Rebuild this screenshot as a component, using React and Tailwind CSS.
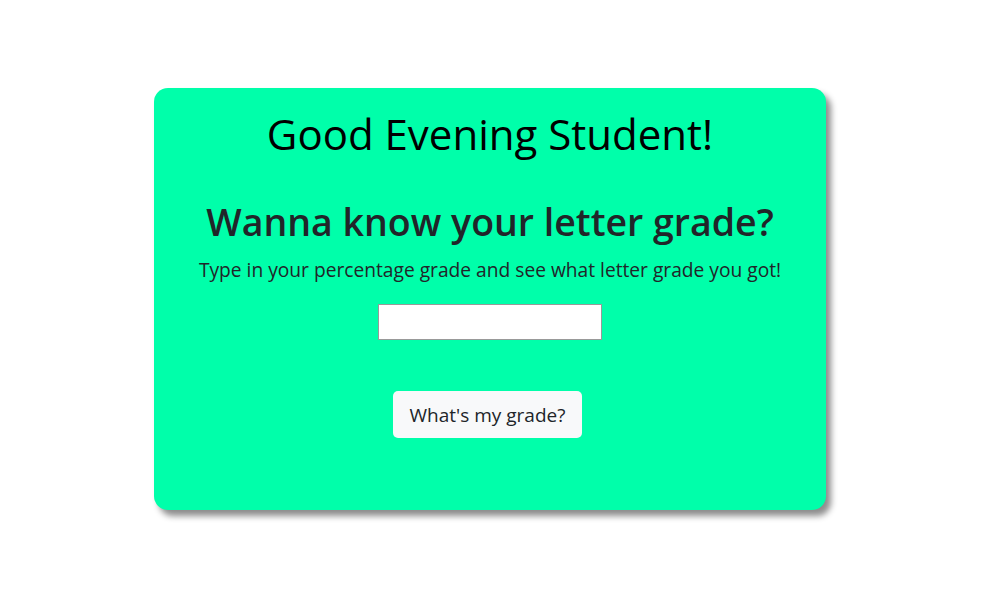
export default function App() {
  return (
    <div className="min-h-screen bg-white pt-[88px]" style={{ fontFamily: '"Open Sans", "Noto Sans", sans-serif' }}>
      <div className="ml-[154px] flex h-[422px] w-[672px] flex-col items-center rounded-[14px] bg-[#00ffaa] shadow-[5px_6px_6px_rgba(0,0,0,0.45)]">
        <h1 className="mt-[18px] text-[42px] leading-[56px] text-black">Good Evening Student!</h1>

        <h2 className="mt-[36px] text-[37.5px] font-semibold leading-[48px] text-[#212529]">
          Wanna know your letter grade?
        </h2>
        <p className="mt-[10px] text-[19.2px] leading-[28px] text-[#212529]">
          Type in your percentage grade and see what letter grade you got!
        </p>

        <input
          type="text"
          className="mt-[20px] h-[36px] w-[224px] border border-[#999] bg-white px-2 outline-none"
        />

        <button className="mt-[51px] mr-[5px] h-[47px] w-[189px] rounded-[5px] bg-[#f8f9fa] pt-[2px] text-[19px] text-[#212529]">
          What's my grade?
        </button>
      </div>
    </div>
  );
}
